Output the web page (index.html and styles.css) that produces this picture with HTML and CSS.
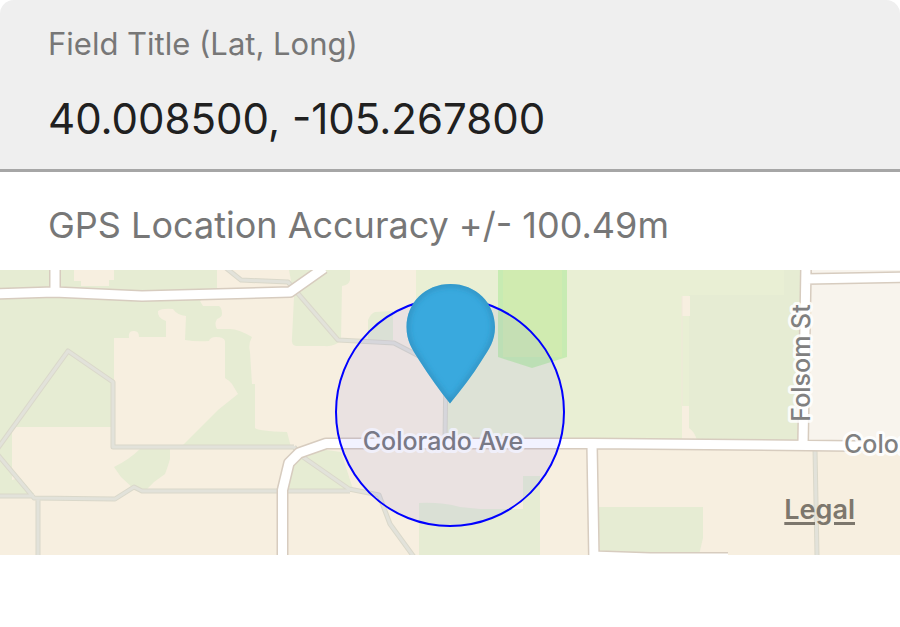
FILE: index.html
```html
<!DOCTYPE html>
<html lang="en">
<head>
<meta charset="utf-8">
<meta name="viewport" content="width=device-width, initial-scale=1">
<title>Location field</title>
<link rel="stylesheet" href="styles.css">
</head>
<body>
<main class="location">
  <div class="field">
    <label class="field-label" for="coords">Field Title (Lat, Long)</label>
    <input class="field-input" id="coords" type="text" value="40.008500, -105.267800">
  </div>
  <p class="accuracy">GPS Location Accuracy +/- 100.49m</p>
  <div class="map">
    <svg class="map-canvas" viewBox="0 270 900 285" role="img" aria-label="Map of Colorado Ave">
      <defs>
        <clipPath id="pin-clip"><path d="M450.500 284C425 284 406.500 303 406.500 327C406.500 341 412 349 419 360C429 376 440 391 450 403.500C461 390 472 376 482 360C489 349 495 341 495 327C495 303 476 284 450.500 284Z"/></clipPath>
        <filter id="pin-blur" x="-20%" y="-20%" width="140%" height="140%"><feGaussianBlur stdDeviation="3"/></filter>
      </defs>
      <rect class="land" x="0" y="270" width="900" height="285"/>

      <!-- green areas -->
      <path class="green" d="M0 270H217V289L200 301L203 306H219Q222 308 222 314Q222 317 217 319Q214 324 217 329H228Q237 328 252 337Q248 344 250 352L252 384H255V428Q258 431 287 432L291 447H0Z"/>
      <path class="green" d="M0 420H12V468L34 494H0Z"/>
      <path class="land" d="M12 427H111V447H130L12 480ZM74 270H114V280H109V286H81V281H74Z"/>
      <path class="land" d="M114 338H129Q128 331 133 331Q139 330 139 337H166V321Q157 318 158 311Q162 308 173 309Q177 315 186 316L185 340Q196 342 209 341Q210 337 216 337Q224 337 225 341V378Q230 381 232 384L238 394L218 410L182 446H114Z"/>
      <path class="land" d="M12 447H900V555H0V494H34L12 468Z"/>
      <path class="green" d="M140 449H170V459Q167 469 165 474L154 482L147 489H134L121 477L114 467Q130 459 140 449Z"/>
      <path class="green" d="M289 270H350V280Q349 285 342 286L341 340Q335 347 324 346H296Q291 345 292 338L294 297Z"/>
      <path class="green" d="M302 449L312 448L341 452L352 486Q355 491 348 491H287L292 466Z"/>
      <path class="green" d="M419 503Q441 502 460 507L480 509H523V476H540V555H419Z"/>
      <path class="green" d="M598 507H703V538L699 555H600Z"/>
      <path class="green" d="M368 320Q371 313 375 312L393 311V340H368Z"/>
      <path class="park" d="M416 270H806V441H446L444 361L416 350Z"/>
      <path class="green" d="M784 270H806V441H689V295H784Z"/>
      <path class="land" d="M682 296H690V316H682ZM682 406H689V428Q694 431 697 440H682Z"/>
      <path class="parcel-edge" d="M682 296V406"/>
      <path class="block" d="M810 270H900V441H806Z"/>
      <path class="pitch-edge" d="M498 270H567V357L532 368L498 357Z"/>
      <path class="pitch" d="M503 270H562V357H503Z"/>

      <!-- footpaths -->
      <path class="path-case" d="M-2 448L68 351L113 382V447H294M-2 455L34 498L115 499L134 487L142 491H350M-2 496H34M38 498V556M226 268L241 280L288 282L338 340L394 343L446 370L445 438M294 447L303 457L349 489L379 495L390 524L414 557M815 449L817 556"/>
      <path class="path" d="M-2 448L68 351L113 382V447H294M-2 455L34 498L115 499L134 487L142 491H350M-2 496H34M38 498V556M226 268L241 280L288 282L338 340L394 343L446 370L445 438M294 447L303 457L349 489L379 495L390 524L414 557M815 449L817 556"/>

      <!-- streets -->
      <path class="road-case" d="M-5 294L54 292L142 296L290 292L324 268M55 265V292M282.500 560V490L289 463L299 453L326 443.500H592L910 446.500M592 444L594 560M806 265L803 445M806 279L910 277M592 556L650 558L728 558"/>
      <path class="road" d="M-5 294L54 292L142 296L290 292L324 268M55 265V292M282.500 560V490L289 463L299 453L326 443.500H592L910 446.500M592 444L594 560M806 265L803 445M806 279L910 277M592 556L650 558L728 558"/>

      <!-- accuracy radius -->
      <text class="street-name" x="443" y="450" text-anchor="middle">Colorado Ave</text>
      <circle class="radius" cx="450" cy="412" r="114"/>
      <text class="street-name" x="844" y="453">Colorado Ave</text>
      <text class="street-name" text-anchor="middle" transform="translate(810 363) rotate(-90)">Folsom St</text>

      <!-- marker -->
      <g clip-path="url(#pin-clip)">
        <path class="pin" d="M400 280H500V410H400Z"/>
        <path class="pin-shade" filter="url(#pin-blur)" d="M450.500 284C425 284 406.500 303 406.500 327C406.500 341 412 349 419 360C429 376 440 391 450 403.500C461 390 472 376 482 360C489 349 495 341 495 327C495 303 476 284 450.500 284Z"/>
      </g>
    </svg>
    <a class="legal" href="#legal">Legal</a>
  </div>
</main>
</body>
</html>
```
FILE: styles.css
```css
* {
  box-sizing: border-box;
}

body {
  margin: 0;
  background: #fff;
  font-family: Inter, "Liberation Sans", sans-serif;
}

.field {
  display: flex;
  flex-direction: column;
  gap: 26px;
  padding: 24px 48px 22px;
  background: #efefef;
  border-bottom: 3px solid #a6a6a6;
  border-radius: 14px 14px 0 0;
}

.field-label {
  color: #777;
  font-size: 31px;
  line-height: 40px;
}

.field-input {
  width: 100%;
  height: 57px;
  padding: 0;
  border: 0;
  outline: 0;
  background: transparent;
  color: #202020;
  font-family: inherit;
  font-size: 42px;
  line-height: 56px;
}

.accuracy {
  margin: 0;
  padding: 29px 48px 21px;
  color: #777;
  font-size: 36px;
  line-height: 48px;
}

.map {
  position: relative;
  overflow: hidden;
}

.map-canvas {
  display: block;
  width: 100%;
  height: auto;
}

.land {
  fill: #f7efe0;
}

.block {
  fill: #f8f4ed;
}

.green {
  fill: #e6ecd3;
}

.park {
  fill: #e9efd4;
}

.pitch {
  fill: #d0ebb0;
}

.pitch-edge {
  fill: #c7ebb2;
}

.parcel-edge {
  stroke: #f0e8d9;
  stroke-width: 1;
}

.path,
.path-case,
.road,
.road-case {
  fill: none;
  stroke-linejoin: round;
}

.path-case {
  stroke: #dad8ca;
  stroke-width: 5;
}

.path {
  stroke: #e2e2da;
  stroke-width: 3;
}

.road-case {
  stroke: #d7ccbf;
  stroke-width: 12;
}

.road {
  stroke: #fff;
  stroke-width: 9;
}

.street-name {
  fill: #808080;
  stroke: rgb(255 255 255 / 85%);
  stroke-width: 6px;
  stroke-linejoin: round;
  paint-order: stroke;
  font-size: 25px;
  font-weight: 500;
}

.radius {
  fill: rgb(0 0 255 / 5%);
  stroke: #00f;
  stroke-width: 2;
}

.pin {
  fill: #39a9de;
}

.pin-shade {
  fill: none;
  stroke: #2b7fab;
  stroke-width: 3;
}

.legal {
  position: absolute;
  right: 5%;
  bottom: 29px;
  color: #7d776d;
  font-size: 27px;
  font-weight: 600;
  line-height: 32px;
  text-decoration-thickness: 3px;
  text-underline-offset: 3px;
}
```
